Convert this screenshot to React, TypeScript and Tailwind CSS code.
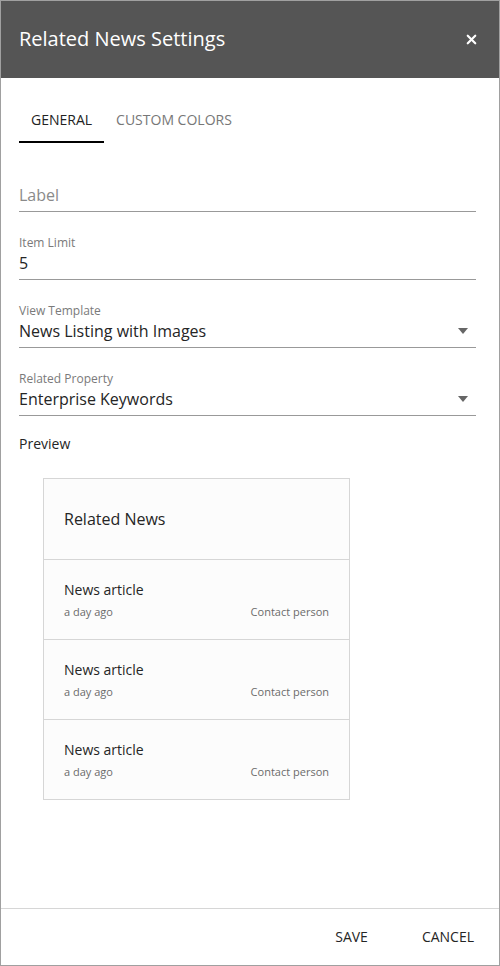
import { X } from 'lucide-react'

const font = { fontFamily: '"Open Sans", "Noto Sans", sans-serif' }

function Field({ label, value, placeholder, select, first }: { label?: string; value?: string; placeholder?: string; select?: boolean; first?: boolean }) {
  return (
    <div className={`${first ? 'pt-[23px]' : 'pt-[22px]'} pb-[5px] border-b border-[#999999]`}>
      <div className="h-4 text-[12px] leading-4 text-[#7a7a7a] pt-px">{label}</div>
      <div className="mt-[2px] flex items-center justify-between h-[22px]">
        {placeholder ? (
          <span className="text-[16px] leading-[22px] text-[#8a8a8a]">{placeholder}</span>
        ) : (
          <span className="text-[16px] leading-[22px] text-[#252525]">{value}</span>
        )}
        {select && (
          <svg width="12" height="6" viewBox="0 0 12 6" className="mr-[7px]">
            <path d="M1 0 L11 0 L6 6 Z" fill="#666666" />
          </svg>
        )}
      </div>
    </div>
  )
}

function NewsRow() {
  return (
    <div className="border-t border-[#d6d6d6] px-5 pt-5 pb-[19px]">
      <div className="text-[14px] leading-5 text-[#252525]">News article</div>
      <div className="mt-1 flex justify-between text-[11px] leading-4 text-[#6b6b6b]">
        <span>a day ago</span>
        <span>Contact person</span>
      </div>
    </div>
  )
}

export default function App() {
  return (
    <div style={font} className="w-[500px] h-[966px] border border-[#a0a0a0] bg-white flex flex-col">
      <div className="h-[77px] bg-[#555555] flex items-center justify-between pl-[18px] pr-[20px] shrink-0">
        <h1 className="text-[20px] text-white leading-7 -mt-px">Related News Settings</h1>
        <X className="h-[15px] w-[15px] text-white" strokeWidth={3.5} />
      </div>

      <div className="flex-1 pl-[18px] pr-[23px]">
        <div className="flex pt-[22px]">
          <button className="px-3 pt-[10px] pb-[11px] border-b-2 border-black text-[14px] leading-5 text-[#222222]">GENERAL</button>
          <button className="px-3 pt-[10px] pb-[11px] border-b-2 border-transparent text-[14px] leading-5 text-[#777777]">CUSTOM COLORS</button>
        </div>

        <Field first placeholder="Label" />
        <Field label="Item Limit" value="5" />
        <Field label="View Template" value="News Listing with Images" select />
        <Field label="Related Property" value="Enterprise Keywords" select />

        <div className="mt-[18px] text-[14px] leading-5 text-[#252525]">Preview</div>

        <div className="mt-6 ml-6 w-[307px] border border-[#d6d6d6] bg-[#fcfcfc]">
          <div className="px-5 py-[29px] text-[16px] leading-[22px] text-[#252525]">Related News</div>
          <NewsRow />
          <NewsRow />
          <NewsRow />
        </div>
      </div>

      <div className="h-[57px] border-t border-[#d6d6d6] flex items-center justify-end gap-[22px] pr-[9px] pb-px shrink-0">
        <button className="px-4 text-[14px] leading-5 text-[#252525]">SAVE</button>
        <button className="px-4 text-[14px] leading-5 text-[#252525]">CANCEL</button>
      </div>
    </div>
  )
}
